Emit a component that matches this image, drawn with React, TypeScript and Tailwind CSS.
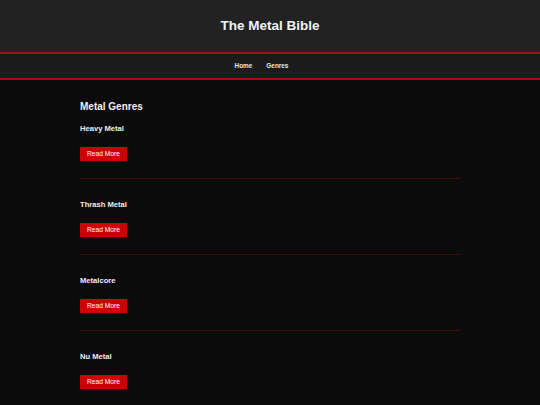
import React from "react";

const genres = ["Heavy Metal", "Thrash Metal", "Metalcore", "Nu Metal"];

export default function App() {
  return (
    <div className="h-[405px] overflow-hidden bg-[#0b0b0b] font-['Liberation_Sans',Arial,sans-serif]">
      <header className="h-[54px] bg-[#222222] border-b-2 border-[#a30f0f] flex items-center justify-center">
        <h1 className="text-[13.5px] font-bold text-[#f2f2f2] leading-none">The Metal Bible</h1>
      </header>
      <nav className="h-[26px] bg-[#1b1b1b] border-b-2 border-[#a30f0f] flex items-center justify-center gap-[14px] pr-[17px]">
        <a className="text-[6.4px] font-bold text-[#e6e6e6] leading-none mt-[1px]">Home</a>
        <a className="text-[6.4px] font-bold text-[#e6e6e6] leading-none mt-[1px]">Genres</a>
      </nav>
      <main className="w-[380px] mx-auto pt-[21px]">
        <h2 className="text-[10px] font-bold text-[#f0f0f0] leading-[12px] mb-[11px]">Metal Genres</h2>
        {genres.map((g, i) => (
          <section
            key={g}
            className={`${i === 0 ? "pt-0" : "pt-[21px]"} pb-[17px] border-b border-[#3f0c0c]`}
          >
            <h3 className="text-[7.6px] font-bold text-[#eeeeee] leading-[10px]">{g}</h3>
            <button className="mt-[13px] h-[14px] w-[47px] bg-[#cc0000] text-white text-[6.7px] leading-none flex items-center justify-center">
              Read More
            </button>
          </section>
        ))}
      </main>
    </div>
  );
}
